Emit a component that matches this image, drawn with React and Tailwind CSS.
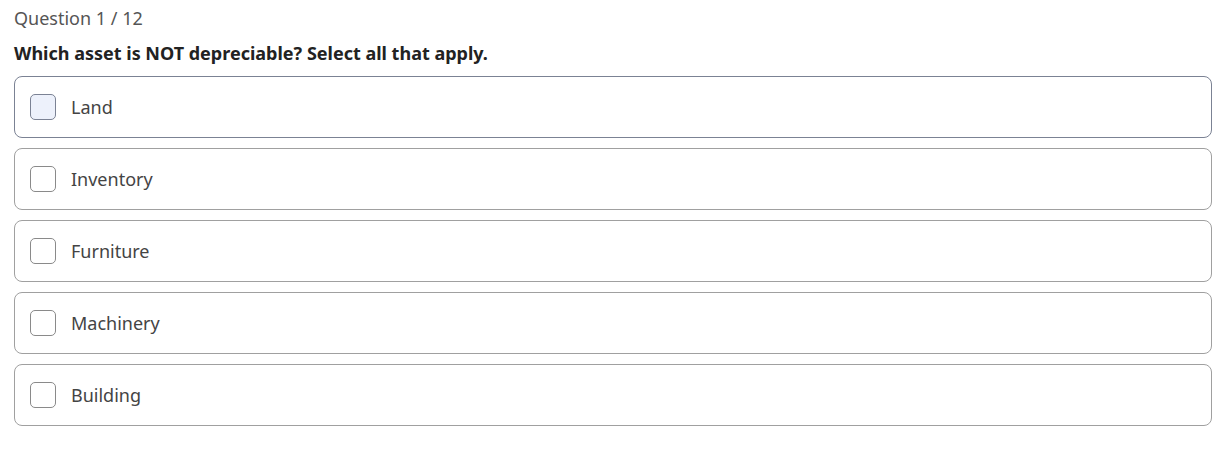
import React, { useState } from 'react';

const options = ['Land', 'Inventory', 'Furniture', 'Machinery', 'Building'];

export default function App() {
  const [checked, setChecked] = useState({});
  const focused = 0;

  return (
    <div className="min-h-screen bg-white pl-[14px] pt-[5px] pr-[17px]" style={{ fontFamily: "'Noto Sans', 'Open Sans', sans-serif" }}>
      <div className="text-[18px] leading-[26px] text-[#555555]">Question 1 / 12</div>
      <h2 className="mt-[9px] text-[18px] leading-[26px] font-bold text-[#222222]">
        Which asset is NOT depreciable? Select all that apply.
      </h2>
      <ul className="mt-[10px] flex flex-col gap-[10px]">
        {options.map((opt, i) => {
          const isFocused = i === focused;
          return (
            <li key={opt}>
              <label
                className={`flex h-[62px] items-center gap-[15px] rounded-[8px] border px-[15px] cursor-pointer ${
                  isFocused ? 'border-[#7b8294]' : 'border-[#a0a0a0]'
                }`}
              >
                <input
                  type="checkbox"
                  className="sr-only"
                  checked={!!checked[opt]}
                  onChange={() => setChecked(prev => ({ ...prev, [opt]: !prev[opt] }))}
                />
                <span
                  className={`h-[26px] w-[26px] flex-shrink-0 rounded-[5px] border ${
                    isFocused ? 'border-[#7b8294] bg-[#edf1fb]' : 'border-[#8a8a8a] bg-white'
                  }`}
                />
                <span className="text-[18px] leading-[26px] text-[#444444]">{opt}</span>
              </label>
            </li>
          );
        })}
      </ul>
    </div>
  );
}
